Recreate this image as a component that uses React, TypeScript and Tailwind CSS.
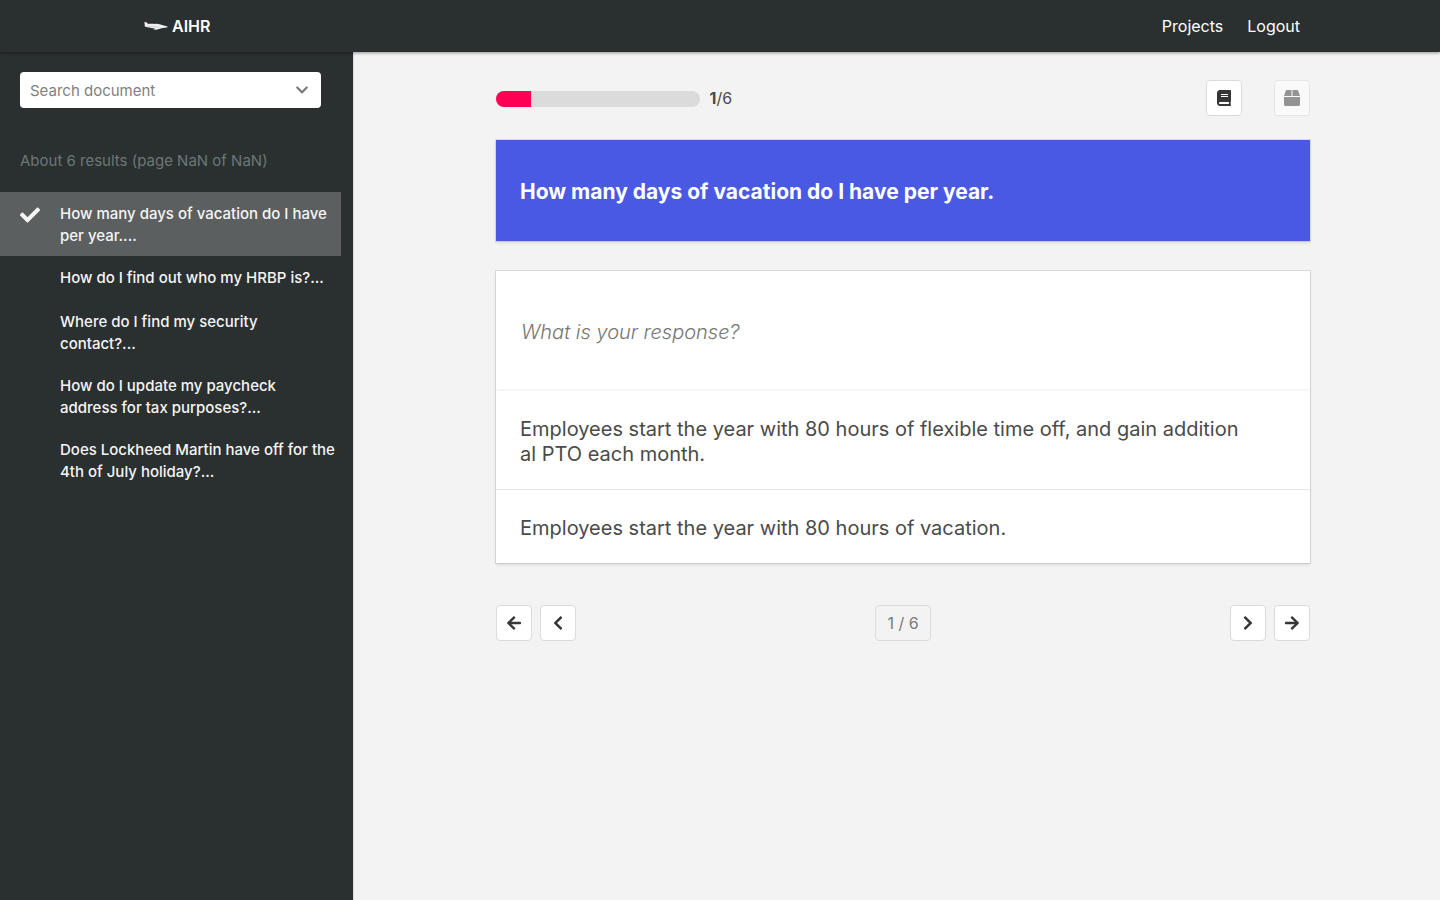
import type { ReactNode } from "react";
import {
  FaArrowLeft,
  FaArrowRight,
  FaBook,
  FaBox,
  FaCheck,
  FaChevronDown,
  FaChevronLeft,
  FaChevronRight,
} from "react-icons/fa";

const documents = [
  "How many days of vacation do I have per year....",
  "How do I find out who my HRBP is?...",
  "Where do I find my security\ncontact?...",
  "How do I update my paycheck\naddress for tax purposes?...",
  "Does Lockheed Martin have off for the\n4th of July holiday?...",
];

const progress = { done: 1, total: 6 };

function PlaneLogo() {
  return (
    <svg width="24" height="8" viewBox="0 0 24 8" aria-hidden="true">
      <path
        d="M0.3 0 L2.2 0.2 L4.4 1.9 C7 1.5 9 1.9 11 1.9 C14 1.4 16 2.4 19 3.3 C21.4 3.8 23 4.4 24 5 C22.2 5.8 20 6.1 17.5 6.2 L12.5 7.8 L9.4 7.6 L11 6.4 C8 6.3 4 5.7 1.5 4.8 L0.3 4.1 L0.9 3.3 Z"
        fill="#eef0f0"
      />
      <path d="M3 4.1 L10 4.7 L15 5.1" stroke="#b4b8b8" strokeWidth="0.5" fill="none" />
    </svg>
  );
}

function IconButton({ label, disabled, children }: { label: string; disabled?: boolean; children: ReactNode }) {
  return (
    <button
      type="button"
      aria-label={label}
      disabled={disabled}
      className="flex size-9 items-center justify-center rounded border border-[#dbdbdb] bg-white text-base text-[#363636] disabled:opacity-50"
    >
      {children}
    </button>
  );
}

function Navbar() {
  return (
    <nav className="relative z-10 flex h-[52px] items-center justify-between bg-[#2a2f2f] pr-[140px] pl-36 text-base text-white shadow-[0_1px_3px_rgba(0,0,0,0.4)]">
      <a href="#" className="flex items-center gap-1 font-semibold">
        <PlaneLogo />
        AIHR
      </a>
      <div className="flex gap-6">
        <a href="#">Projects</a>
        <a href="#">Logout</a>
      </div>
    </nav>
  );
}

function Sidebar() {
  return (
    <aside className="w-[354px] shrink-0 border-r border-[#dbdbdb] bg-[#2a2f2f] pt-5 pr-3">
      <div className="mr-5 ml-5 flex h-9 items-center rounded bg-white pr-3 pl-[10px] text-[#7a7a7a]">
        <input
          type="text"
          aria-label="Search document"
          placeholder="Search document"
          className="min-w-0 flex-1 pt-0.5 text-[15px] outline-none placeholder:text-[#7f7f7f]"
        />
        <FaChevronDown className="size-[14px]" />
      </div>
      <p className="mt-[41px] ml-5 text-[15px] leading-6 text-[#6b7878]">About 6 results (page NaN of NaN)</p>
      <ul className="mt-[19px] text-[15px] leading-[22px] font-medium text-[#f5f5f5]">
        {documents.map((text, i) => (
          <li key={text}>
            <a
              href="#"
              aria-current={i === 0 ? "true" : undefined}
              className="flex min-h-11 pt-[11px] pb-[9px] pl-5 aria-[current=true]:bg-[#5b5f5f]"
            >
              <span className="w-10 shrink-0 pt-0.5">{i === 0 && <FaCheck className="size-5" />}</span>
              <span className="whitespace-pre-line">{text}</span>
            </a>
          </li>
        ))}
      </ul>
    </aside>
  );
}

export default function App() {
  return (
    <div className="flex min-h-screen flex-col bg-[#f3f3f3] font-['Inter','Liberation_Sans',sans-serif] text-[#4a4a4a]">
      <Navbar />
      <div className="flex flex-1">
        <Sidebar />
        <main className="min-w-0 flex-1 pt-7 pr-[130px] pl-[142px]">
          <div className="flex h-9 items-center">
            <div className="mt-0.5 h-4 w-1/4 overflow-hidden rounded-full bg-[#dbdbdb]">
              <div className="h-full bg-[#ff0055]" style={{ width: `${(progress.done / progress.total) * 104}%` }} />
            </div>
            <p className="ml-[10px] text-base">
              <strong>{progress.done}</strong>/{progress.total}
            </p>
            <div className="ml-auto flex gap-8">
              <IconButton label="Guideline">
                <FaBook />
              </IconButton>
              <IconButton label="Archive" disabled>
                <FaBox />
              </IconButton>
            </div>
          </div>

          <section className="mt-6 flex h-[101px] items-center bg-[#4959e3] px-6 pt-0.5 shadow-[0_2px_3px_rgba(10,10,10,0.1),0_0_0_1px_rgba(10,10,10,0.1)]">
            <h1 className="text-[21px] font-bold text-white">How many days of vacation do I have per year.</h1>
          </section>

          <section className="mt-[30px] bg-white text-xl text-[#4a4a4a] shadow-[0_2px_3px_rgba(10,10,10,0.1),0_0_0_1px_rgba(10,10,10,0.1)]">
            <input
              type="text"
              aria-label="Response"
              placeholder="What is your response?"
              className="block h-[120px] w-full rounded border-b-2 border-[#f5f5f5] px-[25px] pt-1 font-light italic outline-none placeholder:text-[#757575]"
            />
            <p className="border-b border-[#e8e8e8] px-6 pt-[26px] pb-[22px] leading-[25px]">
              Employees start the year with 80 hours of flexible time off, and gain addition
              <br />
              al PTO each month.
            </p>
            <p className="px-6 pt-[26px] pb-[22px] leading-[25px]">Employees start the year with 80 hours of vacation.</p>
          </section>

          <div className="mt-[42px] flex items-center justify-between">
            <div className="flex gap-2">
              <IconButton label="First">
                <FaArrowLeft />
              </IconButton>
              <IconButton label="Previous">
                <FaChevronLeft />
              </IconButton>
            </div>
            <span className="flex h-9 w-14 items-center justify-center rounded border border-[#dbdbdb] text-base text-[#7a7a7a]">
              1 / 6
            </span>
            <div className="flex gap-2">
              <IconButton label="Next">
                <FaChevronRight />
              </IconButton>
              <IconButton label="Last">
                <FaArrowRight />
              </IconButton>
            </div>
          </div>
        </main>
      </div>
    </div>
  );
}
